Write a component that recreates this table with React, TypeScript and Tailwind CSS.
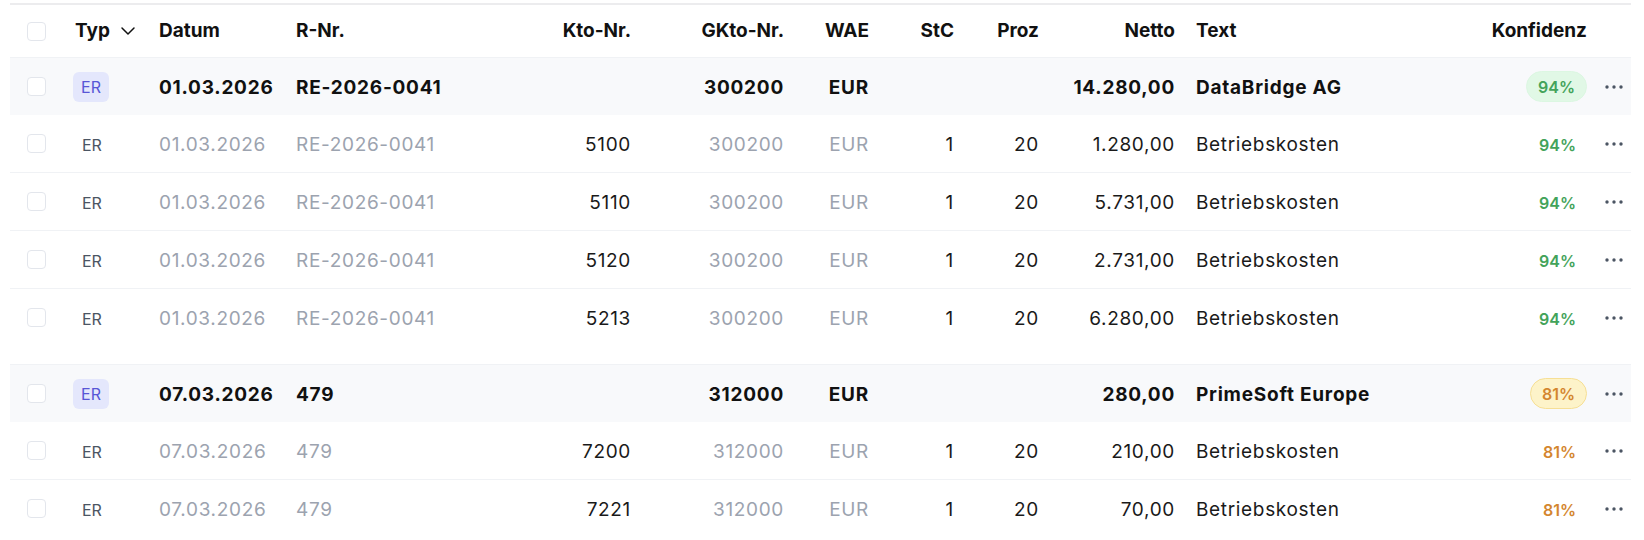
import { ChevronDown } from 'lucide-react'

interface Line {
  kto: string
  stc: string
  proz: string
  netto: string
  text: string
}

interface Beleg {
  datum: string
  rnr: string
  gkto: string
  netto: string
  partner: string
  konfidenz: number
  lines: Line[]
}

const belege: Beleg[] = [
  {
    datum: '01.03.2026',
    rnr: 'RE-2026-0041',
    gkto: '300200',
    netto: '14.280,00',
    partner: 'DataBridge AG',
    konfidenz: 94,
    lines: [
      { kto: '5100', stc: '1', proz: '20', netto: '1.280,00', text: 'Betriebskosten' },
      { kto: '5110', stc: '1', proz: '20', netto: '5.731,00', text: 'Betriebskosten' },
      { kto: '5120', stc: '1', proz: '20', netto: '2.731,00', text: 'Betriebskosten' },
      { kto: '5213', stc: '1', proz: '20', netto: '6.280,00', text: 'Betriebskosten' },
    ],
  },
  {
    datum: '07.03.2026',
    rnr: '479',
    gkto: '312000',
    netto: '280,00',
    partner: 'PrimeSoft Europe',
    konfidenz: 81,
    lines: [
      { kto: '7200', stc: '1', proz: '20', netto: '210,00', text: 'Betriebskosten' },
      { kto: '7221', stc: '1', proz: '20', netto: '70,00', text: 'Betriebskosten' },
    ],
  },
]

const cols =
  'grid grid-cols-[63px_86px_137px_204px_131px_153px_85px_85px_85px_136px_225px_187px_44px] items-center'

// text cells sit a touch lower than the checkbox/badge centre
const cell = 'pt-[4px]'

function Checkbox() {
  return <div className="ml-[17px] h-[19px] w-[19px] rounded-[4px] border border-[#e3e6ec] bg-white" />
}

function Dots() {
  return (
    <svg width="18" height="6" viewBox="0 0 18 6" className="text-[#4b5563]">
      <circle cx="2" cy="3" r="1.7" fill="currentColor" />
      <circle cx="9" cy="3" r="1.7" fill="currentColor" />
      <circle cx="16" cy="3" r="1.7" fill="currentColor" />
    </svg>
  )
}

function Konfidenz({ value, pill }: { value: number; pill: boolean }) {
  const high = value >= 90
  const color = high ? 'text-[#43a35a]' : 'text-[#d4862f]'
  if (!pill) {
    return <span className={`pr-[11px] text-[16px] font-semibold tracking-normal ${color}`}>{value}%</span>
  }
  return (
    <span
      className={`flex h-[31px] items-center rounded-full border px-[11px] text-[16px] font-semibold tracking-normal ${color} ${
        high ? 'border-[#dcf7e2] bg-[#e1f8e6]' : 'border-[#f6df95] bg-[#fdf3c9]'
      }`}
    >
      {value}%
    </span>
  )
}

function GroupRow({ b }: { b: Beleg }) {
  return (
    <div
      className={`${cols} h-[58px] border-t border-[#f0f2f5] bg-[#f8f9fb] font-bold tracking-[0.04em] text-[#111]`}
    >
      <Checkbox />
      <div>
        <span className="flex h-[30px] w-[36px] items-center justify-center rounded-md bg-[#e4e7fc] text-[16px] font-normal tracking-normal text-[#5856d6]">
          ER
        </span>
      </div>
      <div className={cell}>{b.datum}</div>
      <div className={cell}>{b.rnr}</div>
      <div />
      <div className={`${cell} text-right`}>{b.gkto}</div>
      <div className={`${cell} text-right`}>EUR</div>
      <div />
      <div />
      <div className={`${cell} text-right`}>{b.netto}</div>
      <div className={`${cell} pl-[21px]`}>{b.partner}</div>
      <div className="flex justify-end">
        <Konfidenz value={b.konfidenz} pill />
      </div>
      <div className="flex justify-end pr-[8px]">
        <Dots />
      </div>
    </div>
  )
}

function DetailRow({ b, l, last }: { b: Beleg; l: Line; last: boolean }) {
  return (
    <div
      className={`${cols} ${
        last ? 'h-[57px]' : 'h-[58px] border-b border-[#f0f2f5]'
      } tracking-[0.035em] text-[#1a1a1a]`}
    >
      <Checkbox />
      <div className="pl-[9px] pt-[2px] text-[16px] tracking-normal text-[#4b5563]">ER</div>
      <div className={`${cell} text-[#9ca3af]`}>{b.datum}</div>
      <div className={`${cell} text-[#9ca3af]`}>{b.rnr}</div>
      <div className={`${cell} text-right`}>{l.kto}</div>
      <div className={`${cell} text-right text-[#9ca3af]`}>{b.gkto}</div>
      <div className={`${cell} text-right text-[#9ca3af]`}>EUR</div>
      <div className={`${cell} text-right`}>{l.stc}</div>
      <div className={`${cell} text-right`}>{l.proz}</div>
      <div className={`${cell} text-right`}>{l.netto}</div>
      <div className={`${cell} pl-[21px]`}>{l.text}</div>
      <div className="flex justify-end pt-[2px]">
        <Konfidenz value={b.konfidenz} pill={false} />
      </div>
      <div className="flex justify-end pr-[8px]">
        <Dots />
      </div>
    </div>
  )
}

export default function App() {
  return (
    <div className="min-h-[540px] bg-white pt-[3px] font-['Inter',sans-serif] text-[19px]">
      <div className="ml-[10px] w-[1621px] border-t-2 border-[#ececee]">
        <div className={`${cols} h-[52px] font-bold text-[#111]`}>
          <Checkbox />
          <div className="flex items-center pl-[2px]">
            Typ
            <ChevronDown size={24} strokeWidth={1.5} className="ml-[6px]" />
          </div>
          <div>Datum</div>
          <div>R-Nr.</div>
          <div className="text-right">Kto-Nr.</div>
          <div className="text-right">GKto-Nr.</div>
          <div className="text-right">WAE</div>
          <div className="text-right">StC</div>
          <div className="text-right">Proz</div>
          <div className="text-right">Netto</div>
          <div className="pl-[21px]">Text</div>
          <div className="text-right">Konfidenz</div>
          <div />
        </div>
        {belege.map((b, i) => (
          <div key={b.rnr} className={i > 0 ? 'mt-[18px]' : ''}>
            <GroupRow b={b} />
            {b.lines.map((l, j) => (
              <DetailRow key={l.kto} b={b} l={l} last={j === b.lines.length - 1} />
            ))}
          </div>
        ))}
      </div>
    </div>
  )
}
